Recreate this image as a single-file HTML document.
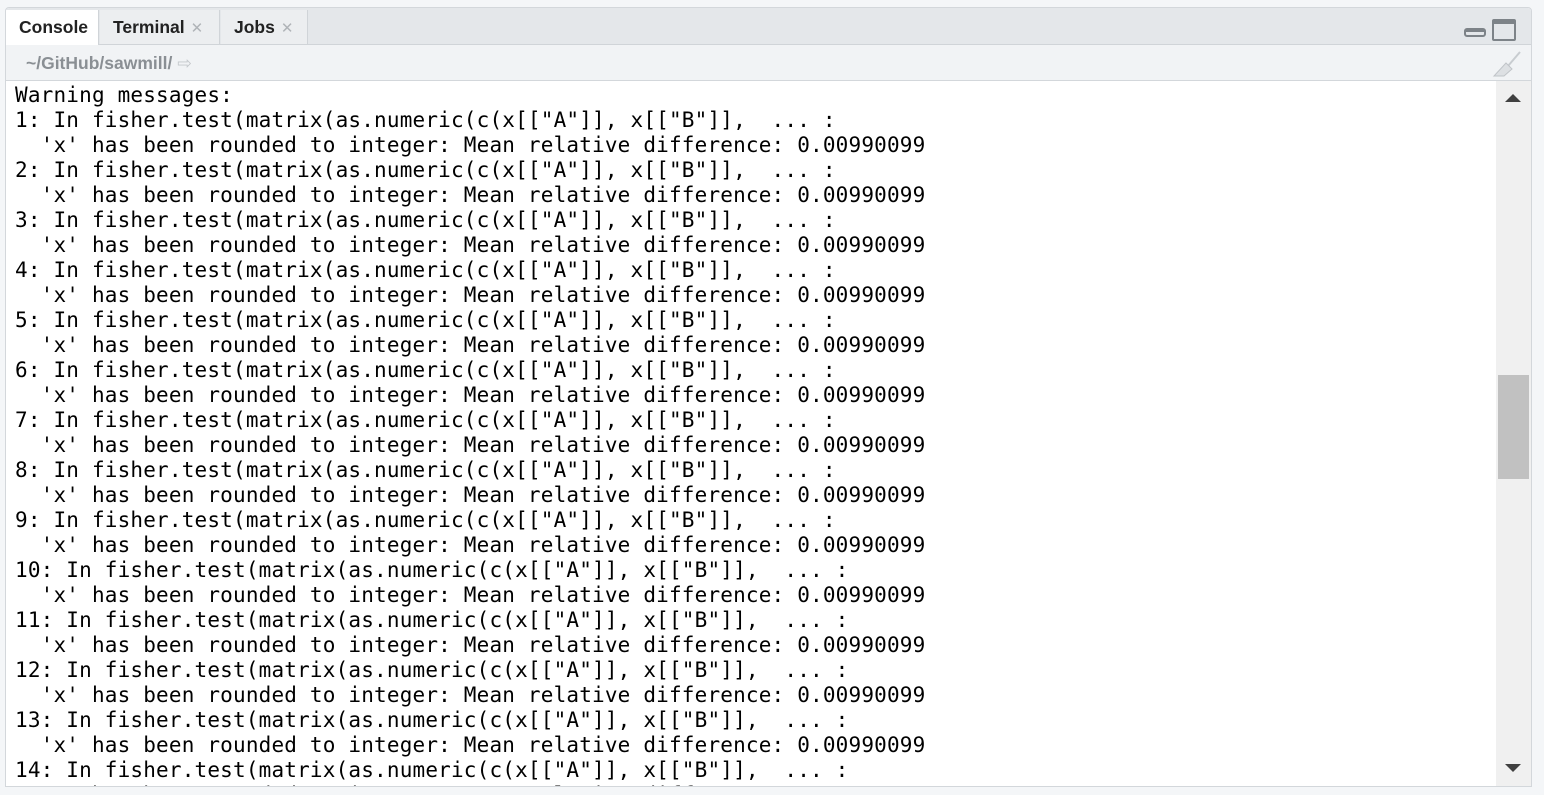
<!DOCTYPE html>
<html><head><style>
body{margin:0;width:1544px;height:795px;background:#f4f6f8;overflow:hidden;position:relative;font-family:"Liberation Sans",sans-serif}
.panel{position:absolute;left:5px;top:7px;width:1525px;height:778px;border:1px solid #d3d7db;border-radius:4px 4px 0 0;background:#fff;overflow:hidden}
.tabs{position:absolute;left:0;top:0;right:0;height:36px;background:#e4e7ea;border-bottom:1px solid #d0d4d8}
.tab{position:absolute;top:2px;height:34px;line-height:34px;font-size:17.5px;font-weight:bold;color:#222;background:#eceef0;border-right:1px solid #d0d4d8;padding-left:13px;box-sizing:border-box}
.tab .x{color:#b0b4b8;font-weight:normal;font-size:15px;margin-left:6px}
.bar{position:absolute;left:0;top:37px;right:0;height:35px;background:#f1f3f5;border-bottom:1px solid #d3d7db}
.bar span{position:absolute;left:20px;top:8px;font-size:17.5px;font-weight:bold;color:#8a8f94}
.out{position:absolute;left:9px;top:75px;font-family:"DejaVu Sans Mono","Liberation Mono",monospace;font-size:21px;letter-spacing:0.18px;line-height:25px;white-space:pre;color:#000}
.sb{position:absolute;left:1490px;top:73px;width:35px;bottom:0;background:#f0f0f0}
.thumb{position:absolute;left:2px;right:2px;top:294px;height:104px;background:#c1c1c1}
</style></head><body>
<div class="panel">
<div class="tabs">
<div class="tab" style="left:0;width:93px;background:#fff;height:35px">Console</div>
<div class="tab" style="left:94px;width:120px">Terminal<span class="x">✕</span></div>
<div class="tab" style="left:215px;width:87px">Jobs<span class="x">✕</span></div>
<svg style="position:absolute;left:1457px;top:10px" width="56" height="24"><rect x="2" y="11" width="20" height="7" rx="2" fill="none" stroke="#7d8388" stroke-width="2"/><rect x="2" y="11" width="20" height="3" fill="#7d8388"/><rect x="30" y="2" width="22" height="20" rx="1" fill="none" stroke="#7d8388" stroke-width="2"/><rect x="30" y="2" width="22" height="4" fill="#7d8388"/></svg>
</div>
<div class="bar"><span>~/GitHub/sawmill/ <span style="position:static;font-weight:normal;color:#c4c8cc">⇨</span></span>
<svg style="position:absolute;left:1484px;top:5px" width="34" height="28"><path d="M30 2 L18 16" stroke="#c8ccd0" stroke-width="2"/><path d="M16 13 L22 19 L14 26 L4 26 Z" fill="#dde0e3" stroke="#c0c4c8"/></svg>
</div>
<div class="out">Warning messages:
1: In fisher.test(matrix(as.numeric(c(x[["A"]], x[["B"]],  ... :
  'x' has been rounded to integer: Mean relative difference: 0.00990099
2: In fisher.test(matrix(as.numeric(c(x[["A"]], x[["B"]],  ... :
  'x' has been rounded to integer: Mean relative difference: 0.00990099
3: In fisher.test(matrix(as.numeric(c(x[["A"]], x[["B"]],  ... :
  'x' has been rounded to integer: Mean relative difference: 0.00990099
4: In fisher.test(matrix(as.numeric(c(x[["A"]], x[["B"]],  ... :
  'x' has been rounded to integer: Mean relative difference: 0.00990099
5: In fisher.test(matrix(as.numeric(c(x[["A"]], x[["B"]],  ... :
  'x' has been rounded to integer: Mean relative difference: 0.00990099
6: In fisher.test(matrix(as.numeric(c(x[["A"]], x[["B"]],  ... :
  'x' has been rounded to integer: Mean relative difference: 0.00990099
7: In fisher.test(matrix(as.numeric(c(x[["A"]], x[["B"]],  ... :
  'x' has been rounded to integer: Mean relative difference: 0.00990099
8: In fisher.test(matrix(as.numeric(c(x[["A"]], x[["B"]],  ... :
  'x' has been rounded to integer: Mean relative difference: 0.00990099
9: In fisher.test(matrix(as.numeric(c(x[["A"]], x[["B"]],  ... :
  'x' has been rounded to integer: Mean relative difference: 0.00990099
10: In fisher.test(matrix(as.numeric(c(x[["A"]], x[["B"]],  ... :
  'x' has been rounded to integer: Mean relative difference: 0.00990099
11: In fisher.test(matrix(as.numeric(c(x[["A"]], x[["B"]],  ... :
  'x' has been rounded to integer: Mean relative difference: 0.00990099
12: In fisher.test(matrix(as.numeric(c(x[["A"]], x[["B"]],  ... :
  'x' has been rounded to integer: Mean relative difference: 0.00990099
13: In fisher.test(matrix(as.numeric(c(x[["A"]], x[["B"]],  ... :
  'x' has been rounded to integer: Mean relative difference: 0.00990099
14: In fisher.test(matrix(as.numeric(c(x[["A"]], x[["B"]],  ... :
  'x' has been rounded to integer: Mean relative difference: 0.00990099</div>
<div class="sb"><div class="thumb"></div>
<svg style="position:absolute;left:9px;top:12px" width="16" height="10"><path d="M0 9 L8 1 L16 9Z" fill="#404040"/></svg>
<svg style="position:absolute;left:9px;top:682px" width="16" height="10"><path d="M0 1 L8 9 L16 1Z" fill="#404040"/></svg>
</div>
</div>
</body></html>
